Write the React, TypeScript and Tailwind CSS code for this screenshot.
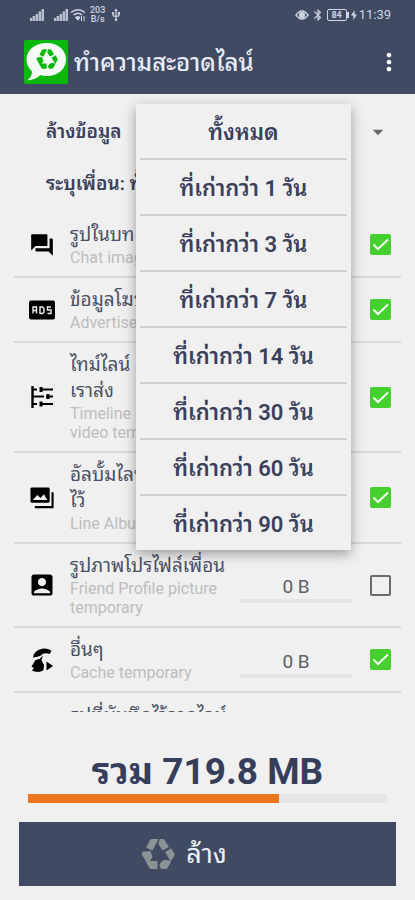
import { useState } from 'react';
import type { ReactNode } from 'react';
import { MdAccountBox, MdArrowDropDown, MdBluetooth, MdForum, MdMoreVert, MdUsb } from 'react-icons/md';

const AGES = [
  'ทั้งหมด',
  'ที่เก่ากว่า 1 วัน',
  'ที่เก่ากว่า 3 วัน',
  'ที่เก่ากว่า 7 วัน',
  'ที่เก่ากว่า 14 วัน',
  'ที่เก่ากว่า 30 วัน',
  'ที่เก่ากว่า 60 วัน',
  'ที่เก่ากว่า 90 วัน',
];

function SignalIcon() {
  return (
    <svg viewBox="0 0 14 12" className="w-3.5 h-3" fill="currentColor">
      <path d="M0 9h2v3H0zM2.500 7h2.500v5H2.500zM5.500 5H8v7H5.500zM8.500 2.500H11v9.500H8.500zM11.500 0H14v12h-2.500z" opacity=".85" />
    </svg>
  );
}

function WifiIcon() {
  return (
    <svg viewBox="0 0 16 14" className="w-4 h-3.5" fill="none" stroke="currentColor" strokeWidth="1.500">
      <path d="M1 4.500Q8-1 15 4.500M3.500 7Q8 3.500 12 7" />
      <path d="M6 9.500Q8 8 9.500 9.500L8 11.500z" fill="currentColor" />
      <path d="M11.500 8v5M14 8v5" strokeWidth="1" />
    </svg>
  );
}

function EyeIcon() {
  return (
    <svg viewBox="0 0 14 12" className="w-3.5 h-3" fill="none" stroke="currentColor" strokeWidth="1.400">
      <path d="M1 6Q7-2 13 6Q7 14 1 6z" />
      <circle cx="7" cy="6" r="2.400" fill="currentColor" />
    </svg>
  );
}

function BatteryIcon() {
  return (
    <div className="flex items-center">
      <span className="w-5 h-3 border border-current rounded-xs text-[9px] leading-[10px] text-center font-bold">84</span>
      <span className="w-0.5 h-1.5 bg-current" />
      <svg viewBox="0 0 6 10" className="w-1.5 h-2.5 ml-0.5" fill="currentColor">
        <path d="M3.500 0 0 5.500h2.300L2.300 10 6 4.500H3.700z" />
      </svg>
    </div>
  );
}

function RecycleIcon({ className }: { className: string }) {
  return (
    <svg viewBox="0 0 36 34" className={className} fill="currentColor">
      <path d="M11.500 1H18.500L12 13.500l-6.500-3.500 4-7.500Q10.300 1 11.500 1z" />
      <path d="M20 1h3q1.400 0 2.200 1.400l4.300 7-5.300 3.300q-1.200.6-2-.6L18.300 6z" />
      <path d="M1.500 14.500l8.500-.8 2.200 6.800L7.500 26.500q-.8.900-1.500-.4L1 18q-.6-1 0-2z" />
      <path d="M25.500 15l6.500-4 3.300 5.500q.6 1.200 0 2.300L31.500 25z" />
      <path d="M7.500 24.500h10V33H11q-1.400 0-2.200-1.300L5.500 26z" />
      <path d="M19.500 28.500q2-4.500 6-5.500l5.500 1.300q1 .5.400 1.700L28.300 31.500Q27.500 33 26 33h-5z" />
    </svg>
  );
}

function Logo() {
  return (
    <div className="relative w-11 h-11 shrink-0">
      <svg viewBox="0 0 44 44" className="w-11 h-11">
        <rect width="44" height="44" rx="2" fill="#0bb80f" />
        <path
          d="M23 3c11 0 19 7 19 16.500s-8 16.500-19 16.500c-2.500 0-4.500-.3-6.500-1-3 3-7.500 5-13.500 5.500 3.500-2.500 5-5.500 5-9C5 28.500 2.500 24.500 2.500 19.500 2.500 10 11 3 23 3z"
          fill="#f7fbf7"
        />
      </svg>
      <RecycleIcon className="absolute left-3 top-2 size-5.5 text-[#0bb80f]" />
    </div>
  );
}

function AdsIcon() {
  return (
    <svg viewBox="0 0 26 19" className="w-6.5 h-5">
      <rect width="26" height="19" rx="2" />
      <path
        d="M4 13V6.500h3.500V13M4 10h3.500M11 6.500h2.500L15 8v3.500L13.500 13H11zM22 6.500h-3.500V9.500H22V13h-3.500"
        fill="none"
        stroke="#f0f0f0"
        strokeWidth="1.400"
      />
    </svg>
  );
}

function TimelineIcon() {
  return (
    <svg viewBox="0 0 22 22" className="size-5.5" stroke="#000" fill="none">
      <path d="M1.500 0v22" strokeWidth="2.400" />
      <path d="M2 3.500h4M9 3.500h13M2 10.500h11M15 10.500h7M2 18h4M9 18h13" strokeWidth="2" />
      <path d="M10 1v5M17 8v5M10 15.500v5" strokeWidth="3" />
    </svg>
  );
}

function AlbumIcon() {
  return (
    <svg viewBox="0 0 25 22" className="w-6 h-5.5">
      <path
        fillRule="evenodd"
        d="M2 0h17a1.500 1.500 0 0 1 1.500 1.500v13A1.500 1.500 0 0 1 19 16H2a1.500 1.500 0 0 1-1.500-1.500v-13A1.500 1.500 0 0 1 2 0zM3 13h15l-3.500-6-3.500 4-3.500-3z"
      />
      <path d="M23.500 5v15.500H5" fill="none" stroke="#000" strokeWidth="2.200" />
    </svg>
  );
}

function OthersIcon() {
  return (
    <svg viewBox="0 0 22 24" className="w-5.5 h-6">
      <path d="M2 9.500C3 3 10-1 17 1q2 .6 3.500 2L18.500 6C15 4.500 12 5 10 7.500Q7 9 2 9.500z" />
      <path d="M4.500 12l4-1L12 7.500 10.500 12l2.500 5-.5 5C10 24.500 4 24.500 1 22.500l2-2.500-2.500-1.500z" />
      <path d="M15.500 13.500l6.500 4.500-6.500 4.500z" />
    </svg>
  );
}

type Entry = {
  id: string;
  icon: ReactNode;
  title: string;
  detail: string;
  size?: string;
  checked: boolean;
};

const ENTRIES: Entry[] = [
  { id: 'chat', icon: <MdForum size={26} />, title: 'รูปในบท', detail: 'Chat image', checked: true },
  { id: 'ads', icon: <AdsIcon />, title: 'ข้อมูลโฆษณา', detail: 'Advertise', checked: true },
  { id: 'timeline', icon: <TimelineIcon />, title: 'ไทม์ไลน์\nเราส่ง', detail: 'Timeline\nvideo temp', checked: true },
  { id: 'album', icon: <AlbumIcon />, title: 'อัลบั้มไลน์\nไว้', detail: 'Line Album', checked: true },
  { id: 'profile', icon: <MdAccountBox size={28} />, title: 'รูปภาพโปรไฟล์เพื่อน', detail: 'Friend Profile picture\ntemporary', size: '0 B', checked: false },
  { id: 'others', icon: <OthersIcon />, title: 'อื่นๆ', detail: 'Cache temporary', size: '0 B', checked: true },
];

function Row({ entry, checked, onToggle }: { entry: Entry; checked: boolean; onToggle: () => void }) {
  return (
    <li className="flex items-center border-b-2 border-[#d8d8d8] py-[9px] pr-2.5">
      <span className="w-14 shrink-0 flex justify-center text-black">{entry.icon}</span>
      <label htmlFor={entry.id} className="flex-1 whitespace-pre text-[#4b5063]">
        <span className="block text-[19px] leading-[26px]">{entry.title}</span>
        <span className="block text-base leading-[19px] text-[#bdbdbd]">{entry.detail}</span>
      </label>
      {entry.size && (
        <div className="w-28 shrink-0 pt-2 text-center text-[19px] leading-6 text-[#5c5f68]">
          {entry.size}
          <div className="h-1 bg-[#e5e5e5]" />
        </div>
      )}
      <span className="relative ml-[18px] size-[21px] shrink-0">
        <input
          id={entry.id}
          type="checkbox"
          checked={checked}
          onChange={onToggle}
          className="block appearance-none size-[21px] rounded-xs border-2 border-[#6a6a6a] checked:border-[#45d02f] checked:bg-[#45d02f]"
        />
        {checked && (
          <svg viewBox="0 0 21 21" className="absolute inset-0 pointer-events-none" fill="none" stroke="#f4fff0" strokeWidth="2">
            <path d="M3.500 10.500 8 15 18 5.500" />
          </svg>
        )}
      </span>
    </li>
  );
}

export default function App() {
  const [picked, setPicked] = useState(ENTRIES.filter((e) => e.checked).map((e) => e.id));
  const [age, setAge] = useState(AGES[0]);

  const toggle = (id: string) =>
    setPicked((prev) => (prev.includes(id) ? prev.filter((p) => p !== id) : [...prev, id]));

  return (
    <div className="h-screen flex flex-col overflow-hidden bg-[#f0f0f0] font-[Roboto,'Noto_Sans_Thai_Looped',sans-serif]">
      <header className="bg-[#404a63] text-[#e8ecf5] pb-2.5">
        <div className="flex items-center justify-between h-[30px] pl-[30px] pr-6 text-[#cfd5e2]">
          <div className="flex items-center">
            <SignalIcon />
            <span className="w-2.5" />
            <SignalIcon />
            <span className="w-0.5" />
            <WifiIcon />
            <span className="ml-1 text-[9px] leading-[9px] text-center font-medium">
              203
              <br />
              B/s
            </span>
            <MdUsb size={14} className="ml-1" />
          </div>
          <div className="flex items-center gap-0.5">
            <EyeIcon />
            <MdBluetooth size={14} />
            <BatteryIcon />
            <span className="text-[13px]">11:39</span>
          </div>
        </div>
        <div className="flex items-center pt-2.5 pl-6 pr-3">
          <Logo />
          <h1 className="flex-1 pl-1.5 pt-0.5 text-2xl leading-8 font-medium">ทำความสะอาดไลน์</h1>
          <button type="button" aria-label="เมนู" className="text-white">
            <MdMoreVert size={28} />
          </button>
        </div>
      </header>

      <main className="flex-1 min-h-0 flex flex-col px-3.5">
        <div className="relative flex items-center h-[76px] pl-8 pr-2.5 text-[#3a405c]">
          <label htmlFor="age" className="w-[90px] text-[19px] font-semibold">
            ล้างข้อมูล
          </label>
          <select
            id="age"
            value={age}
            onChange={(e) => setAge(e.target.value)}
            className="flex-1 appearance-none text-center text-lg font-bold"
          >
            {AGES.map((a) => (
              <option key={a}>{a}</option>
            ))}
          </select>
          <MdArrowDropDown size={26} className="text-[#6b6b6b]" />
          <ul className="absolute z-10 left-[122px] top-2.5 w-[215px] px-1 bg-[#f0f0f0] shadow-[0_4px_12px_rgba(0,0,0,0.35)] divide-y-2 divide-[#d0d0d0]">
            {AGES.map((a) => (
              <li key={a}>
                <button
                  type="button"
                  onClick={() => setAge(a)}
                  className="block w-full h-[54px] pt-0.5 text-center text-[22px] font-semibold"
                >
                  {a}
                </button>
              </li>
            ))}
          </ul>
        </div>
        <p className="h-[43px] pt-0.5 pl-8 text-[19px] leading-6 font-semibold text-[#3a405c]">ระบุเพื่อน: ทั้งหมด</p>
        <ul className="flex-1 min-h-0 overflow-hidden">
          {ENTRIES.map((e) => (
            <Row key={e.id} entry={e} checked={picked.includes(e.id)} onToggle={() => toggle(e.id)} />
          ))}
          <li className="pt-2.5 pl-14 text-[19px] leading-[26px] text-[#4b5063]">รูปที่บันทึกไว้จากไลน์</li>
        </ul>
      </main>

      <footer className="pt-9 px-[19px] pb-3.5">
        <p className="pt-0.5 text-center text-[37px] leading-[44px] font-bold text-[#363e5c]">รวม 719.8 MB</p>
        <div className="mx-[9px] h-[9px] bg-[#e5e5e5]">
          <div className="h-full bg-[#ec761f]" style={{ width: '70%' }} />
        </div>
        <button
          type="button"
          className="mt-[19px] w-full h-16 pr-12 flex items-center justify-center gap-2.5 bg-[#404a63] text-[27px] text-[#eef1f8]"
        >
          <RecycleIcon className="w-9 h-8 text-[#8b9394]" />
          ล้าง
        </button>
      </footer>
    </div>
  );
}
